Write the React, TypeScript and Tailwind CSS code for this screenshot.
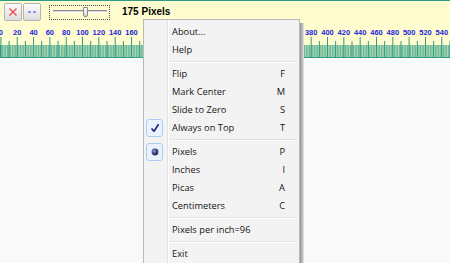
import React from "react";

const S = 0.8165;
const X0 = 0.9;

function Ruler() {
  const units: number[] = [];
  for (let u = 0; u <= 560; u += 2) units.push(u);
  const labels: number[] = [];
  for (let u = 0; u <= 540; u += 20) {
    const x = X0 + u * S;
    if (x > 138 && x < 306) continue;
    labels.push(u);
  }
  return (
    <svg width="450" height="34" className="block">
      <rect x="0" y="21" width="450" height="12" fill="#4ea794" />
      {units.map((u) => (
        <line key={"s" + u} x1={X0 + u * S + 0.8} x2={X0 + u * S + 0.8} y1="21" y2="33" stroke="#c6e8b8" strokeWidth="0.8" />
      ))}
      {units
        .filter((u) => u % 10 === 0)
        .map((u) => (
          <line key={"t" + u} x1={X0 + u * S} x2={X0 + u * S} y1={u % 20 === 0 ? 13 : 17} y2="33" stroke="#2f9a86" strokeWidth="1" />
        ))}
      <line x1="0" x2="450" y1="33.5" y2="33.5" stroke="#2f9a86" strokeWidth="1" />
      <line x1="0.5" x2="0.5" y1="21" y2="34" stroke="#2f9a86" strokeWidth="1" />
      {labels.map((u) => (
        <text key={"l" + u} x={X0 + u * S} y="11" textAnchor="middle" fontSize="7.5" fontWeight="bold" fill="#2424d8" fontFamily="'Liberation Sans', Arial, sans-serif">
          {u}
        </text>
      ))}
    </svg>
  );
}

function Item({ label, key2, icon }: { label: string; key2?: string; icon?: "check" | "radio" }) {
  return (
    <div className="relative flex h-[18px] items-center pl-[28px] pr-[14px]">
      {icon && (
        <div className="absolute left-[2px] top-0 flex h-[18px] w-[17px] items-center justify-center rounded-[3px] border border-[#a9cdf3] bg-[#eaf2fc]">
          {icon === "check" ? (
            <svg width="10" height="10" viewBox="0 0 10 10">
              <path d="M1.5 5.5 L4 8.2 L8.6 1.2" fill="none" stroke="#1c2a8c" strokeWidth="1.7" strokeLinejoin="round" />
            </svg>
          ) : (
            <svg width="8" height="8" viewBox="0 0 8 8">
              <defs>
                <radialGradient id="rg" cx="0.38" cy="0.35" r="0.7">
                  <stop offset="0" stopColor="#9aa6e0" />
                  <stop offset="0.5" stopColor="#3a4692" />
                  <stop offset="1" stopColor="#1e255e" />
                </radialGradient>
              </defs>
              <circle cx="4" cy="4" r="3.4" fill="url(#rg)" />
            </svg>
          )}
        </div>
      )}
      <span className="flex-1">{label}</span>
      {key2 && <span>{key2}</span>}
    </div>
  );
}

function Sep() {
  return (
    <div className="flex h-[6px] flex-col justify-center pl-[26px] pr-[2px]">
      <div className="h-px bg-[#e0e0e0]" />
      <div className="h-px bg-white" />
    </div>
  );
}

export default function App() {
  return (
    <div className="relative h-[263px] w-[450px] overflow-hidden bg-[#f9f9f9]" style={{ fontFamily: "'Open Sans', 'Noto Sans', sans-serif" }}>
      <div className="flex h-[58px] flex-col border-t border-[#2f9a86] bg-[#fffdcf]">
        <div className="flex h-[23px] items-start pt-[2px]">
          <div className="ml-[4px] flex h-[18px] w-[18px] items-center justify-center rounded-[2px] border border-[#b4b4b4] bg-gradient-to-b from-[#fbfbfb] to-[#dedede]">
            <svg width="10" height="10" viewBox="0 0 10 10">
              <path d="M1.5 1.5 L8.5 8.5 M8.5 1.5 L1.5 8.5" stroke="#f04848" strokeWidth="1.3" />
            </svg>
          </div>
          <div className="ml-[1px] flex h-[18px] w-[18px] items-center justify-center rounded-[2px] border border-[#b4b4b4] bg-gradient-to-b from-[#fbfbfb] to-[#dedede]">
            <svg width="10" height="4" viewBox="0 0 10 4">
              <path d="M1 2 H4 M6 2 H9" stroke="#3048f0" strokeWidth="1.2" />
            </svg>
          </div>
          <div className="relative ml-[8px] mt-[2px] h-[15px] w-[61px] border border-dotted border-[#505050]">
            <div className="absolute left-[3px] right-[2px] top-[4px] h-[3px] border-y border-t-[#8a8a8a] border-b-white bg-[#d8d8d8]" />
            <div className="absolute left-[33px] top-[1px] h-[10px] w-[5px] rounded-b-[2px] border border-[#8a8a8a] bg-gradient-to-b from-white to-[#d8d8d8]" />
          </div>
          <div className="ml-[12px] mt-[3px] text-[10px] font-bold leading-[12px] text-black" style={{ fontFamily: "'Liberation Sans', Arial, sans-serif" }}>
            175 Pixels
          </div>
        </div>
        <Ruler />
      </div>

      <div className="absolute left-[143px] top-[19px] flex">
        <div className="relative w-[157px] border border-[#b9b9b9] bg-[#f3f3f3] pb-[10px] pt-[3px] text-[9.3px] text-[#141414]">
          <div className="absolute bottom-0 left-[23px] top-0 w-px bg-[#e2e3e3]" />
          <div className="absolute bottom-0 left-[24px] top-0 w-px bg-white" />
          <Item label="About..." />
          <Item label="Help" />
          <Sep />
          <Item label="Flip" key2="F" />
          <Item label="Mark Center" key2="M" />
          <Item label="Slide to Zero" key2="S" />
          <Item label="Always on Top" key2="T" icon="check" />
          <Sep />
          <Item label="Pixels" key2="P" icon="radio" />
          <Item label="Inches" key2="I" />
          <Item label="Picas" key2="A" />
          <Item label="Centimeters" key2="C" />
          <Sep />
          <Item label="Pixels per inch=96" />
          <Sep />
          <Item label="Exit" />
        </div>
        <div className="mt-[4px] w-[4px] bg-gradient-to-r from-[#8f8f8f] to-[#e6e6e6]" />
      </div>
    </div>
  );
}
